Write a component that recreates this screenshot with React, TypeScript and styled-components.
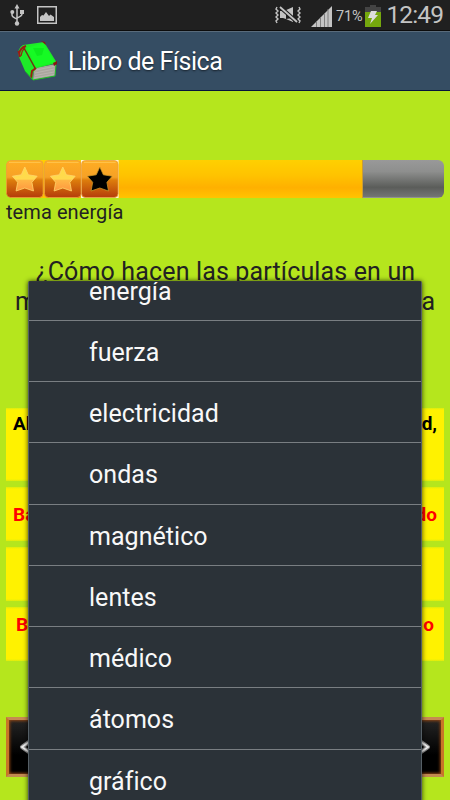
import React from "react";
import styled, { createGlobalStyle } from "styled-components";

const Global = createGlobalStyle`
  * { box-sizing: border-box; }
  body { margin: 0; background: #b5e61d; overflow: hidden; }
`;

const Screen = styled.main`
  position: relative;
  display: flex;
  flex-direction: column;
  width: 450px;
  height: 800px;
  overflow: hidden;
  background: #b5e61d;
  font-family: Roboto, "Liberation Sans", sans-serif;
  color: #222;
`;

const StatusBar = styled.header`
  display: flex;
  align-items: center;
  justify-content: space-between;
  flex: none;
  height: 31px;
  padding: 0 7px 0 10px;
  background: #202020;
  border-bottom: 1px solid #0c0c0c;
  color: #c4c4c4;
  svg { display: block; flex: none; }
`;

const StatusGroup = styled.div`
  display: flex;
  align-items: center;
  height: 30px;
`;

const UsbIcon = styled.svg`margin-right: 13px;`;
const SignalIcon = styled.svg`margin: 3px 4px 0 10px;`;
const Percent = styled.span`
  width: 29px;
  font-size: 14.5px;
  line-height: 30px;
  letter-spacing: -0.1px;
  padding-top: 3px;
`;
const BatteryIcon = styled.svg`margin: 2px 5px 0 0;`;
const Clock = styled.span`
  width: 57px;
  font-size: 24.5px;
  line-height: 30px;
  text-align: right;
  white-space: nowrap;
  letter-spacing: -0.9px;
`;

const TitleBar = styled.div`
  display: flex;
  align-items: center;
  flex: none;
  height: 60px;
  padding-left: 16px;
  background: #354d63;
  border-top: 1px solid #596b7b;
  border-bottom: 1px solid #07143c;
`;

const Title = styled.h1`
  margin: 2px 0 0 10px;
  font-size: 25px;
  font-weight: 400;
  line-height: 30px;
  letter-spacing: -0.48px;
  color: #fff;
  text-shadow: 0 1px 2px #18222c;
`;

const Content = styled.section`
  flex: 1;
  padding: 69px 6px 0;
`;

const Progress = styled.div`
  display: flex;
  height: 38px;
  border-radius: 6px;
  overflow: hidden;
  background: linear-gradient(#999 0%, #8e8f8e 30%, #5b5d5a 72%, #737473 96%, #a0a0a0 100%);
`;

const Earned = styled.div`
  display: flex;
  width: 357px;
  background: linear-gradient(#ffd000, #ffc300 40%, #ffb000 73%, #ffc400);
  border-right: 1px solid #c99c35;
`;

const StarTile = styled.svg`
  display: block;
  flex: none;
  width: 37.6px;
  height: 38px;
`;

const Topic = styled.p`
  margin: 2px 0 0;
  font-size: 20px;
  line-height: 24px;
  letter-spacing: 0.08px;
`;

const Question = styled.div`
  height: 60px;
  margin-top: 33px;
  font-size: 25px;
  line-height: 30px;
  text-align: center;
  white-space: nowrap;
`;

const QuestionText = styled.div`
  letter-spacing: 0.15px;
  padding-left: 1px;
`;

const QuestionLine = styled.div`
  display: flex;
  justify-content: space-between;
  padding: 0 9px;
`;

const Answers = styled.div`
  display: flex;
  flex-direction: column;
  gap: 6px;
  margin-top: 91px;
`;

const Answer = styled.div<{ $height: number; $color?: string; $top?: number; $side?: number }>`
  display: flex;
  justify-content: space-between;
  height: ${(p) => p.$height}px;
  padding: ${(p) => p.$top ?? 0}px ${(p) => p.$side ?? 7}px 0;
  background: linear-gradient(#dcec0e, #fff200 2px, #fff200 calc(100% - 2px), #dcec0e);
  color: ${(p) => p.$color ?? "#000"};
  font-size: 19px;
  font-weight: 700;
  line-height: 24px;
`;

const Navigation = styled.nav`
  display: flex;
  justify-content: space-between;
  margin-top: 56px;
`;

const NavButton = styled.button`
  display: flex;
  align-items: center;
  justify-content: center;
  width: 56px;
  height: 60px;
  padding: 0;
  border: 3px solid #c87528;
  border-top-color: #c68a52;
  border-bottom-color: #c28a50;
  background: linear-gradient(#242424, #000 65%);
  box-shadow: inset 0 0 3px 1px #8d4513;
`;

const Menu = styled.ul`
  position: absolute;
  left: 27.5px;
  top: 281px;
  width: 394.5px;
  height: 540px;
  margin: 0;
  padding: 0;
  list-style: none;
  overflow: hidden;
  background: #2b3238;
  border: 1px solid #555f66;
  border-top-color: #30373b;
  border-radius: 2px 2px 0 0;
  box-shadow: 0 0 5px rgba(0, 0, 0, 0.75);
`;

const MenuItem = styled.li`
  display: flex;
  align-items: center;
  height: 61.25px;
  padding: 4px 0 0 60.5px;
  border-bottom: 1.5px solid #797e82;
  color: #f8f8f8;
  font-size: 25px;
  line-height: 32px;
  letter-spacing: 0.04px;
  &:first-child { margin-top: -22.5px; }
`;

const topics = ["energía", "fuerza", "electricidad", "ondas", "magnético", "lentes", "médico", "átomos", "gráfico"];

function Star({ active = false }: { active?: boolean }) {
  return (
    <StarTile viewBox="0 0 38 38" preserveAspectRatio="none">
      <defs>
        <linearGradient id="tile" x2="0" y2="1">
          <stop stopColor="#ffae22" /><stop offset=".45" stopColor="#f6a126" />
          <stop offset=".53" stopColor="#dd7d0c" /><stop offset="1" stopColor="#b53c0b" />
        </linearGradient>
        <linearGradient id="star" x2="0" y2="1">
          <stop stopColor="#ffdc45" /><stop offset=".5" stopColor="#ffda4e" />
          <stop offset=".56" stopColor="#ffb746" /><stop offset="1" stopColor="#ff963f" />
        </linearGradient>
      </defs>
      {active && <rect width="38" height="38" fill="#fff6d8" />}
      <rect x=".5" y=".5" width="37" height="37" rx="4" fill="url(#tile)" stroke="#e9a03c" strokeWidth=".8" />
      <path d="M3 2.4H35" stroke="#ffd060" strokeWidth=".7" />
      <path d="M19 7L22.6 14.8L31.5 16.2L26.2 22.3L27.8 31L19 28L10.2 31L11.8 22.3L6.5 16.2L15.4 14.8Z"
        fill={active ? "#000" : "url(#star)"} stroke={active ? "#c99425" : "#ffd56b"} strokeWidth=".8" strokeLinejoin="round" />
    </StarTile>
  );
}

function Book() {
  return (
    <svg width="42" height="42" viewBox="0 0 42 42">
      <path d="M18 28L40 24L39 36L17 40Z" fill="#aaa69e" />
      <path d="M20 30L38 26.5M19 33L38 29M19 35.5L38 32M18 38L38 34.5" stroke="#bcb9b2" strokeWidth=".8" />
      <path d="M7 5L28 2L41 23L21 28Q16 31 17 40L9 31L3 17Q1 8 7 5Z" fill="#1eea28" />
      <path d="M11 8L27 3L39 22L20 27Z" fill="#16fa24" />
      <path d="M17 8L28 8L26 15L21 16Z" fill="#0be41a" opacity=".7" />
      <path d="M8 8L19 28" fill="none" stroke="#6e3310" strokeWidth="1.5" />
      <path d="M3 14Q4 8 10 6M2.5 11L4 17M15 38L16 31L20 28" fill="none" stroke="#9b1c15" strokeWidth="2" />
      <path d="M5 16Q6 10 9 8" fill="none" stroke="#9b1c15" strokeWidth="1.2" />
      <path d="M25 1L29 2L30 5ZM37 23L41 21L41 24L38 26Z" fill="#8a1713" />
      <path d="M9 31L17 40L39 36L40 25" fill="none" stroke="#1bbd25" strokeWidth="1" />
    </svg>
  );
}

function Arrow({ right = false }: { right?: boolean }) {
  return (
    <svg width="30" height="24" viewBox="0 0 30 24">
      <path d={right ? "M20 7L27 12L20 17" : "M10 7L3 12L10 17"} fill="none" stroke="#888" strokeWidth="4" strokeLinejoin="round" />
      <path d={right ? "M20 7L27 12L20 17" : "M10 7L3 12L10 17"} fill="none" stroke="#eee" strokeWidth="1.8" />
    </svg>
  );
}

export default function App() {
  return (
    <Screen>
      <Global />
      <StatusBar>
        <StatusGroup>
          <UsbIcon width="14" height="22" viewBox="0 0 14 22">
            <path d="M7 3V20M2 8V11Q2 13 7 15M12 8V10Q12 12 7 14" fill="none" stroke="#c4c4c4" strokeWidth="1.5" />
            <path d="M7 0L9.5 4.5H4.5ZM10 6H14V10H10Z" fill="#c4c4c4" />
            <circle cx="2.3" cy="8" r="2" fill="#c4c4c4" /><circle cx="7" cy="19.5" r="2.2" fill="#c4c4c4" />
          </UsbIcon>
          <svg width="20" height="18" viewBox="0 0 20 18">
            <rect x=".75" y=".75" width="18.5" height="16.5" fill="none" stroke="#c4c4c4" strokeWidth="1.5" />
            <path d="M3 15V11L5 9L6.5 9.5L9 6L12 10L13.5 8.5L17 11V15Z" fill="#c4c4c4" />
          </svg>
        </StatusGroup>
        <StatusGroup>
          <svg width="26" height="18" viewBox="0 0 26 18">
            <path d="M2 1L1 3L3 5L1 7L3 9L1 11L3 13L1 15L2 17M24 1L25 3L23 5L25 7L23 9L25 11L23 13L25 15L24 17" fill="none" stroke="#c4c4c4" strokeWidth="1.4" />
            <path d="M5 5H9L18 1V11L11 6V13L8 12H5Z" fill="#c4c4c4" />
            <path d="M11 13L18 16V12Z" fill="#c4c4c4" />
            <path d="M5 1L22 16" stroke="#202020" strokeWidth="4" />
            <path d="M5 1L22 16" stroke="#c4c4c4" strokeWidth="1.8" />
          </svg>
          <SignalIcon width="21" height="21" viewBox="0 0 21 21">
            <path d="M0 21L21 0V21Z" fill="#c4c4c4" />
            <path d="M5.5 15V21M9.5 11V21M13.5 7V21M17 3V21" stroke="#777" strokeWidth=".9" />
          </SignalIcon>
          <Percent>71%</Percent>
          <BatteryIcon width="16" height="22" viewBox="0 0 16 22">
            <path d="M5 0H11V2H16V22H0V2H5Z" fill="#444" />
            <path d="M0 7H16V22H0Z" fill="#75a70d" />
            <path d="M6 6H12L10 10H13L5 19L7 13H3Z" fill="#ddd" />
          </BatteryIcon>
          <Clock>12:49</Clock>
        </StatusGroup>
      </StatusBar>
      <TitleBar><Book /><Title>Libro de Física</Title></TitleBar>
      <Content>
        <Progress><Earned><Star /><Star /><Star active /></Earned></Progress>
        <Topic>tema energía</Topic>
        <Question>
          <QuestionText>¿Cómo hacen las partículas en un</QuestionText>
          <QuestionLine><span>m</span><span>a</span></QuestionLine>
        </Question>
        <Answers>
          <Answer $height={73} $top={4}><span>Al</span><span>d,</span></Answer>
          <Answer $height={54} $color="#f00" $top={16}><span>Ba</span><span>do</span></Answer>
          <Answer $height={54} />
          <Answer $height={54} $color="#f00" $top={6} $side={10}><span>B</span><span>o</span></Answer>
        </Answers>
        <Navigation>
          <NavButton aria-label="Anterior"><Arrow /></NavButton>
          <NavButton aria-label="Siguiente"><Arrow right /></NavButton>
        </Navigation>
      </Content>
      <Menu>{topics.map((topic) => <MenuItem key={topic}>{topic}</MenuItem>)}</Menu>
    </Screen>
  );
}
